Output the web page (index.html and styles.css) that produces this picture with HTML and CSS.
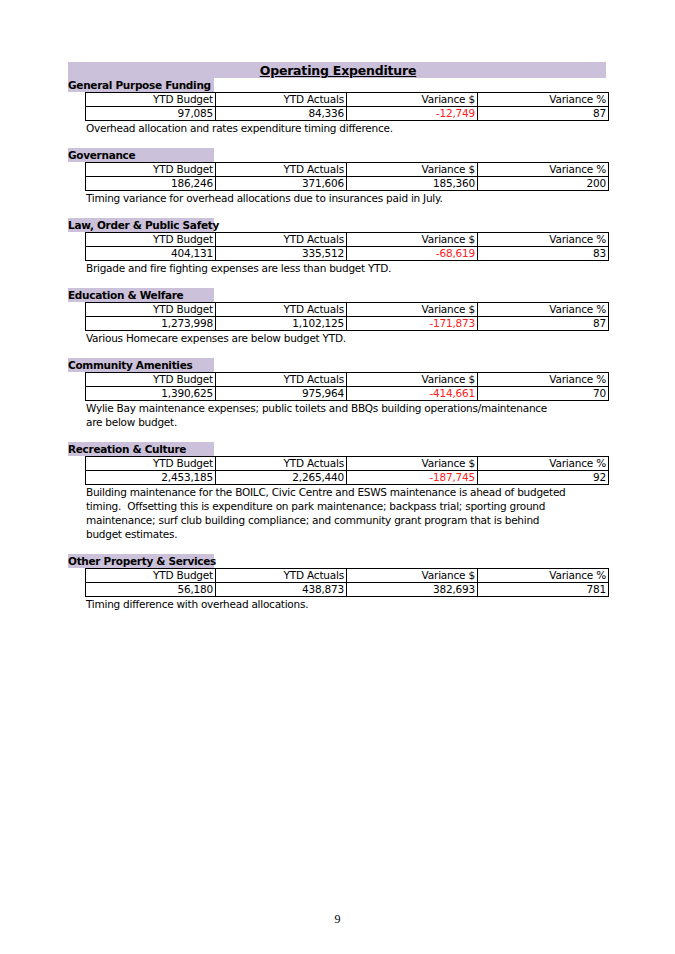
FILE: index.html
```html
<!DOCTYPE html>
<html>
<head>
<meta charset="utf-8">
<link rel="stylesheet" href="styles.css">
</head>
<body>
<div class="page">
  <div class="title-band"><span class="title">Operating Expenditure</span></div>

  <section class="sec first">
    <div class="sec-head">General Purpose Funding</div>
    <table class="fig">
      <tr><td>YTD Budget</td><td>YTD Actuals</td><td>Variance $</td><td>Variance %</td></tr>
      <tr><td>97,085</td><td>84,336</td><td class="neg">-12,749</td><td>87</td></tr>
    </table>
    <p class="note">Overhead allocation and rates expenditure timing difference.</p>
  </section>

  <section class="sec">
    <div class="sec-head">Governance</div>
    <table class="fig">
      <tr><td>YTD Budget</td><td>YTD Actuals</td><td>Variance $</td><td>Variance %</td></tr>
      <tr><td>186,246</td><td>371,606</td><td>185,360</td><td>200</td></tr>
    </table>
    <p class="note">Timing variance for overhead allocations due to insurances paid in July.</p>
  </section>

  <section class="sec">
    <div class="sec-head">Law, Order &amp; Public Safety</div>
    <table class="fig">
      <tr><td>YTD Budget</td><td>YTD Actuals</td><td>Variance $</td><td>Variance %</td></tr>
      <tr><td>404,131</td><td>335,512</td><td class="neg">-68,619</td><td>83</td></tr>
    </table>
    <p class="note">Brigade and fire fighting expenses are less than budget YTD.</p>
  </section>

  <section class="sec">
    <div class="sec-head">Education &amp; Welfare</div>
    <table class="fig">
      <tr><td>YTD Budget</td><td>YTD Actuals</td><td>Variance $</td><td>Variance %</td></tr>
      <tr><td>1,273,998</td><td>1,102,125</td><td class="neg">-171,873</td><td>87</td></tr>
    </table>
    <p class="note">Various Homecare expenses are below budget YTD.</p>
  </section>

  <section class="sec">
    <div class="sec-head">Community Amenities</div>
    <table class="fig">
      <tr><td>YTD Budget</td><td>YTD Actuals</td><td>Variance $</td><td>Variance %</td></tr>
      <tr><td>1,390,625</td><td>975,964</td><td class="neg">-414,661</td><td>70</td></tr>
    </table>
    <p class="note">Wylie Bay maintenance expenses; public toilets and BBQs building operations/maintenance<br>are below budget.</p>
  </section>

  <section class="sec">
    <div class="sec-head">Recreation &amp; Culture</div>
    <table class="fig">
      <tr><td>YTD Budget</td><td>YTD Actuals</td><td>Variance $</td><td>Variance %</td></tr>
      <tr><td>2,453,185</td><td>2,265,440</td><td class="neg">-187,745</td><td>92</td></tr>
    </table>
    <p class="note">Building maintenance for the BOILC, Civic Centre and ESWS maintenance is ahead of budgeted<br>timing.&nbsp; Offsetting this is expenditure on park maintenance; backpass trial; sporting ground<br>maintenance; surf club building compliance; and community grant program that is behind<br>budget estimates.</p>
  </section>

  <section class="sec">
    <div class="sec-head">Other Property &amp; Services</div>
    <table class="fig">
      <tr><td>YTD Budget</td><td>YTD Actuals</td><td>Variance $</td><td>Variance %</td></tr>
      <tr><td>56,180</td><td>438,873</td><td>382,693</td><td>781</td></tr>
    </table>
    <p class="note">Timing difference with overhead allocations.</p>
  </section>

  <div class="page-num">9</div>
</div>
</body>
</html>
```
FILE: styles.css
```css
html, body {
  margin: 0;
  padding: 0;
  background: #ffffff;
}
.page {
  width: 675px;
  height: 954px;
  position: relative;
  padding-top: 62px;
  box-sizing: border-box;
  font-family: "DejaVu Sans", Verdana, sans-serif;
  color: #000;
}
.title-band {
  margin-left: 68px;
  width: 538px;
  height: 16px;
  background: #ccc1da;
  text-align: center;
  line-height: 16px;
}
.title {
  font-weight: bold;
  font-size: 12.5px;
  text-decoration: underline;
  letter-spacing: -0.2px;
  padding-left: 2px;
}
.sec {
  margin-top: 13px;
}
.sec.first {
  margin-top: 0;
}
.sec-head {
  margin-left: 68px;
  width: 146px;
  height: 14px;
  line-height: 14px;
  background: #ccc1da;
  font-weight: bold;
  font-size: 10.5px;
  white-space: nowrap;
  letter-spacing: -0.3px;
}
.fig {
  margin-left: 85px;
  width: 521px;
  border-collapse: collapse;
  table-layout: fixed;
  font-size: 10.5px;
  letter-spacing: -0.2px;
}
.fig td {
  border: 1px solid #000;
  padding: 0 2px 0 0;
  height: 13px;
  line-height: 13px;
  text-align: right;
  white-space: nowrap;
}
.fig td:nth-child(1) { width: 127px; }
.fig td:nth-child(2) { width: 128px; }
.fig td:nth-child(3) { width: 128px; }
.fig td:nth-child(4) { width: 128px; }
.fig td.neg {
  color: #ff2020;
}
.note {
  margin: 0 0 0 86px;
  font-size: 10.5px;
  line-height: 14px;
  white-space: nowrap;
  letter-spacing: -0.25px;
}
.page-num {
  position: absolute;
  left: 0;
  width: 675px;
  top: 912px;
  text-align: center;
  font-family: "Liberation Serif", "Times New Roman", serif;
  font-size: 12px;
}
```
